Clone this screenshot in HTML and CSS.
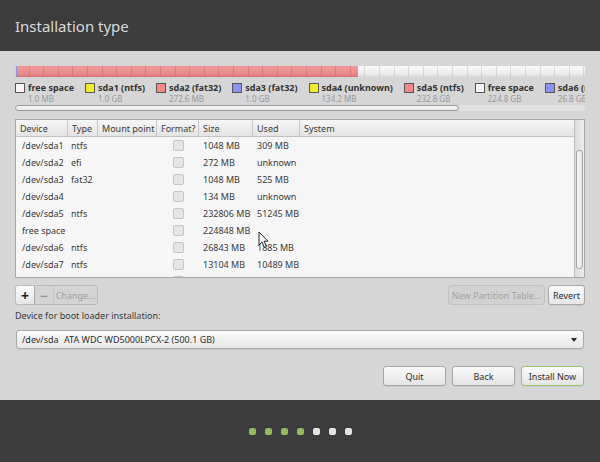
FILE: index.html
```html
<!DOCTYPE html>
<html>
<head>
<meta charset="utf-8">
<link rel="stylesheet" href="styles.css">
</head>
<body>
<div class="app">
  <header class="top"><h1 class="title">Installation type</h1></header>
  <main class="content">
    <div class="diskbar"><div class="bar-used"></div></div>
    <div class="legend">
      <div class="li"><span class="sw sw-free"></span><div class="lt"><b>free space</b><small>1.0 MB</small></div></div>
      <div class="li"><span class="sw sw-yellow"></span><div class="lt"><b>sda1 (ntfs)</b><small>1.0 GB</small></div></div>
      <div class="li"><span class="sw sw-red"></span><div class="lt"><b>sda2 (fat32)</b><small>272.6 MB</small></div></div>
      <div class="li"><span class="sw sw-blue"></span><div class="lt"><b>sda3 (fat32)</b><small>1.0 GB</small></div></div>
      <div class="li"><span class="sw sw-yellow"></span><div class="lt"><b>sda4 (unknown)</b><small>134.2 MB</small></div></div>
      <div class="li"><span class="sw sw-red"></span><div class="lt"><b>sda5 (ntfs)</b><small>232.8 GB</small></div></div>
      <div class="li"><span class="sw sw-free"></span><div class="lt"><b>free space</b><small>224.8 GB</small></div></div>
      <div class="li"><span class="sw sw-blue"></span><div class="lt"><b>sda6 (ntfs)</b><small>26.8 GB</small></div></div>
    </div>
    <div class="hscroll"><div class="hthumb"></div></div>

    <div class="table">
      <div class="tmain">
        <div class="row thead">
          <div class="c c-dev">Device</div>
          <div class="c c-type">Type</div>
          <div class="c c-mnt">Mount point</div>
          <div class="c c-fmt">Format?</div>
          <div class="c c-size">Size</div>
          <div class="c c-used">Used</div>
          <div class="c c-sys">System</div>
        </div>
        <div class="tbody">
          <div class="row"><div class="c c-dev">/dev/sda1</div><div class="c c-type">ntfs</div><div class="c c-mnt"></div><div class="c c-fmt"><span class="chk"></span></div><div class="c c-size">1048 MB</div><div class="c c-used">309 MB</div><div class="c c-sys"></div></div>
          <div class="row"><div class="c c-dev">/dev/sda2</div><div class="c c-type">efi</div><div class="c c-mnt"></div><div class="c c-fmt"><span class="chk"></span></div><div class="c c-size">272 MB</div><div class="c c-used">unknown</div><div class="c c-sys"></div></div>
          <div class="row"><div class="c c-dev">/dev/sda3</div><div class="c c-type">fat32</div><div class="c c-mnt"></div><div class="c c-fmt"><span class="chk"></span></div><div class="c c-size">1048 MB</div><div class="c c-used">525 MB</div><div class="c c-sys"></div></div>
          <div class="row"><div class="c c-dev">/dev/sda4</div><div class="c c-type"></div><div class="c c-mnt"></div><div class="c c-fmt"><span class="chk"></span></div><div class="c c-size">134 MB</div><div class="c c-used">unknown</div><div class="c c-sys"></div></div>
          <div class="row"><div class="c c-dev">/dev/sda5</div><div class="c c-type">ntfs</div><div class="c c-mnt"></div><div class="c c-fmt"><span class="chk"></span></div><div class="c c-size">232806 MB</div><div class="c c-used">51245 MB</div><div class="c c-sys"></div></div>
          <div class="row"><div class="c c-dev">free space</div><div class="c c-type"></div><div class="c c-mnt"></div><div class="c c-fmt"><span class="chk"></span></div><div class="c c-size">224848 MB</div><div class="c c-used"></div><div class="c c-sys"></div></div>
          <div class="row"><div class="c c-dev">/dev/sda6</div><div class="c c-type">ntfs</div><div class="c c-mnt"></div><div class="c c-fmt"><span class="chk"></span></div><div class="c c-size">26843 MB</div><div class="c c-used">1885 MB</div><div class="c c-sys"></div></div>
          <div class="row"><div class="c c-dev">/dev/sda7</div><div class="c c-type">ntfs</div><div class="c c-mnt"></div><div class="c c-fmt"><span class="chk"></span></div><div class="c c-size">13104 MB</div><div class="c c-used">10489 MB</div><div class="c c-sys"></div></div>
          <div class="row"><div class="c c-dev">free space</div><div class="c c-type"></div><div class="c c-mnt"></div><div class="c c-fmt"><span class="chk"></span></div><div class="c c-size">0 MB</div><div class="c c-used"></div><div class="c c-sys"></div></div>
        </div>
      </div>
      <div class="vscroll"><div class="vthumb"></div></div>
      <svg class="cursor" width="12" height="18" viewBox="0 0 12 18"><path d="M1 1 L1 14 L4 11 L6.5 16.5 L8.5 15.5 L6 10.2 L10 10.2 Z" fill="#f4f4f4" stroke="#2a2a2a" stroke-width="1" stroke-linejoin="round"/></svg>
    </div>

    <div class="toolrow">
      <div class="btngroup">
        <div class="gbtn gbtn-plus">+</div>
        <div class="gbtn gbtn-minus">−</div>
        <div class="gbtn gbtn-change">Change...</div>
      </div>
      <div class="spacer"></div>
      <div class="btn btn-disabled">New Partition Table...</div>
      <div class="btn btn-revert">Revert</div>
    </div>

    <div class="bootlabel">Device for boot loader installation:</div>
    <div class="combo">
      <span class="combo-dev">/dev/sda</span><span class="combo-name">ATA WDC WD5000LPCX-2 (500.1 GB)</span>
      <span class="arrow"></span>
    </div>

    <div class="actions">
      <div class="btn abtn">Quit</div>
      <div class="btn abtn">Back</div>
      <div class="btn abtn abtn-primary">Install Now</div>
    </div>
  </main>
  <footer class="bottom">
    <div class="dots">
      <span class="dot dot-done"></span>
      <span class="dot dot-done"></span>
      <span class="dot dot-done"></span>
      <span class="dot dot-done"></span>
      <span class="dot"></span>
      <span class="dot"></span>
      <span class="dot"></span>
    </div>
  </footer>
</div>
</body>
</html>
```

FILE: styles.css
```css
* { box-sizing: border-box; }
html, body { margin: 0; padding: 0; }
body {
  width: 600px;
  height: 462px;
  overflow: hidden;
  font-family: "Noto Sans", "Open Sans", "DejaVu Sans", sans-serif;
  color: #3a3a3a;
  background: #d6d6d6;
}
.app { width: 600px; height: 462px; display: flex; flex-direction: column; }

.top {
  height: 51px;
  background: #3c3c3c;
  display: flex;
  align-items: center;
  padding-left: 15px;
}
.title {
  margin: 0;
  font-size: 15px;
  font-weight: normal;
  color: #dadada;
}

.content {
  height: 349px;
  background: #d6d6d6;
  padding: 15px 15px 0 15px;
  display: flex;
  flex-direction: column;
}

/* disk bar */
.diskbar {
  height: 11px;
  width: 570px;
  border-radius: 1px;
  background:
    repeating-linear-gradient(90deg, transparent 0, transparent 13.6px, rgba(0,0,0,0.1) 13.6px, rgba(0,0,0,0.1) 14.6px),
    linear-gradient(#fafafa, #ececec 70%, #d8d8d8);
  display: flex;
  overflow: hidden;
}
.bar-used {
  width: 343px;
  height: 100%;
  background:
    linear-gradient(90deg, #e4e430 0, #e4e430 1px, #8a90e6 1px, #8a90e6 2px, transparent 2px),
    repeating-linear-gradient(90deg, transparent 0, transparent 13.6px, rgba(150,40,40,0.18) 13.6px, rgba(150,40,40,0.18) 14.6px),
    linear-gradient(#f19a9a, #e88a8a 70%, #d47676);
}

.legend {
  margin-top: 5px;
  width: 570px;
  height: 22px;
  display: flex;
  overflow: hidden;
  white-space: nowrap;
}
.li { display: flex; flex: none; margin-right: 11px; }
.sw {
  width: 10px;
  height: 10px;
  border: 1px solid #555;
  margin-top: 1px;
  margin-right: 3px;
  flex: none;
}
.sw-free { background: #f6f6f6; }
.sw-yellow { background: #f2f22a; }
.sw-red { background: #f08a8a; }
.sw-blue { background: #8c94ee; }
.lt { display: flex; flex-direction: column; }
.lt b { font-size: 9px; line-height: 12px; font-weight: bold; color: #333; }
.lt small { font-size: 8px; line-height: 10px; color: #9a9a9a; }

.hscroll {
  margin-top: 1px;
  height: 6px;
  width: 570px;
  background: #e2e2e2;
  border-radius: 3px;
}
.hthumb {
  width: 444px;
  height: 6px;
  border: 1px solid #9c9c9c;
  border-radius: 3px;
  background: linear-gradient(#f6f6f6, #e6e6e6);
}

/* table */
.table {
  position: relative;
  margin-top: 8px;
  width: 570px;
  height: 159px;
  border: 1px solid #a8a8a8;
  display: flex;
  background: #f6f6f6;
  overflow: hidden;
}
.tmain { width: 558px; display: flex; flex-direction: column; }
.row {
  display: grid;
  grid-template-columns: 52px 30px 59px 42px 54px 47px 1fr;
  height: 17px;
  align-items: center;
  font-size: 9px;
  color: #3a3a3a;
  flex: none;
}
.thead {
  height: 17px;
  background: linear-gradient(#f6f6f6, #e4e4e4);
  border-bottom: 1px solid #c2c2c2;
  align-items: stretch;
}
.thead .c {
  border-right: 1px solid #c8c8c8;
  padding-left: 4px;
  display: flex;
  align-items: center;
  color: #3c3c3c;
  white-space: nowrap;
  overflow: hidden;
}
.thead .c-sys { border-right: none; }
.tbody { display: flex; flex-direction: column; overflow: hidden; }
.tbody .c { padding-left: 4px; white-space: nowrap; overflow: hidden; }
.tbody .c-dev { padding-left: 6px; }
.tbody .c-fmt { display: flex; justify-content: center; padding-left: 0; }
.tbody .c-type { padding-left: 3px; }
.chk {
  width: 11px;
  height: 11px;
  border: 1px solid #c6c6c6;
  border-radius: 2px;
  background: #e6e6e6;
}

.vscroll {
  width: 10px;
  background: linear-gradient(90deg, #dcdcdc, #ececec);
  border-left: 1px solid #bdbdbd;
  padding-top: 30px;
  display: flex;
  justify-content: center;
}
.vthumb {
  width: 7px;
  height: 119px;
  border: 1px solid #a4a4a4;
  border-radius: 3px;
  background: linear-gradient(90deg, #f4f4f4, #e6e6e6);
}
.cursor {
  position: absolute;
  left: 242px;
  top: 111px;
}

/* tool row */
.toolrow {
  margin-top: 7px;
  height: 20px;
  display: flex;
  font-size: 9px;
}
.spacer { flex: 1; }
.btngroup {
  display: flex;
  border: 1px solid #bcbcbc;
  border-radius: 3px;
  overflow: hidden;
  background: #d4d4d4;
}
.gbtn {
  display: flex;
  align-items: center;
  justify-content: center;
  color: #a0a0a0;
}
.gbtn-plus {
  width: 19px;
  background: linear-gradient(#fbfbfb, #e6e6e6);
  border-right: 1px solid #a8a8a8;
  color: #222;
  font-size: 14px;
  font-weight: bold;
}
.gbtn-minus {
  width: 19px;
  border-right: 1px solid #c4c4c4;
  font-size: 14px;
  color: #8a8a8a;
}
.gbtn-change { width: 43px; }

.btn {
  height: 20px;
  display: flex;
  align-items: center;
  justify-content: center;
  border-radius: 3px;
  font-size: 9px;
}
.btn-disabled {
  width: 97px;
  border: 1px solid #c2c2c2;
  background: #d2d2d2;
  color: #a2a2a2;
}
.btn-revert {
  width: 37px;
  margin-left: 3px;
  border: 1px solid #a6a6a6;
  background: linear-gradient(#fafafa, #e6e6e6);
  color: #2e2e2e;
  box-shadow: 0 1px 0 rgba(0,0,0,0.06);
}

.bootlabel {
  margin-top: 5px;
  font-size: 9px;
  line-height: 12px;
  color: #3a3a3a;
}
.combo {
  position: relative;
  margin-top: 8px;
  margin-left: 1px;
  height: 19px;
  width: 568px;
  border: 1px solid #aaaaaa;
  border-radius: 3px;
  background: linear-gradient(#fafafa, #e8e8e8);
  display: flex;
  align-items: center;
  padding-left: 5px;
  font-size: 9px;
  color: #2e2e2e;
  box-shadow: 0 1px 0 rgba(0,0,0,0.05);
}
.combo-dev { width: 42px; }
.arrow {
  position: absolute;
  right: 6px;
  top: 7px;
  width: 0;
  height: 0;
  border-left: 3.5px solid transparent;
  border-right: 3.5px solid transparent;
  border-top: 4px solid #2a2a2a;
}

.actions {
  margin-top: 17px;
  display: flex;
  justify-content: flex-end;
  gap: 6px;
  padding-right: 1px;
}
.abtn {
  width: 63px;
  border: 1px solid #a6a6a6;
  background: linear-gradient(#fafafa, #e4e4e4);
  color: #2e2e2e;
  box-shadow: 0 1px 0 rgba(0,0,0,0.06);
}
.abtn-primary { border: 1px solid #96c470; }

.bottom {
  flex: 1;
  background: #3c3c3c;
  display: flex;
  justify-content: center;
  padding-top: 28px;
}
.dots { display: flex; gap: 9px; height: 7px; margin-left: 1px; }
.dot {
  width: 7px;
  height: 7px;
  border-radius: 2px;
  background: #e4e4e4;
}
.dot-done { background: #8fbb66; }
```
